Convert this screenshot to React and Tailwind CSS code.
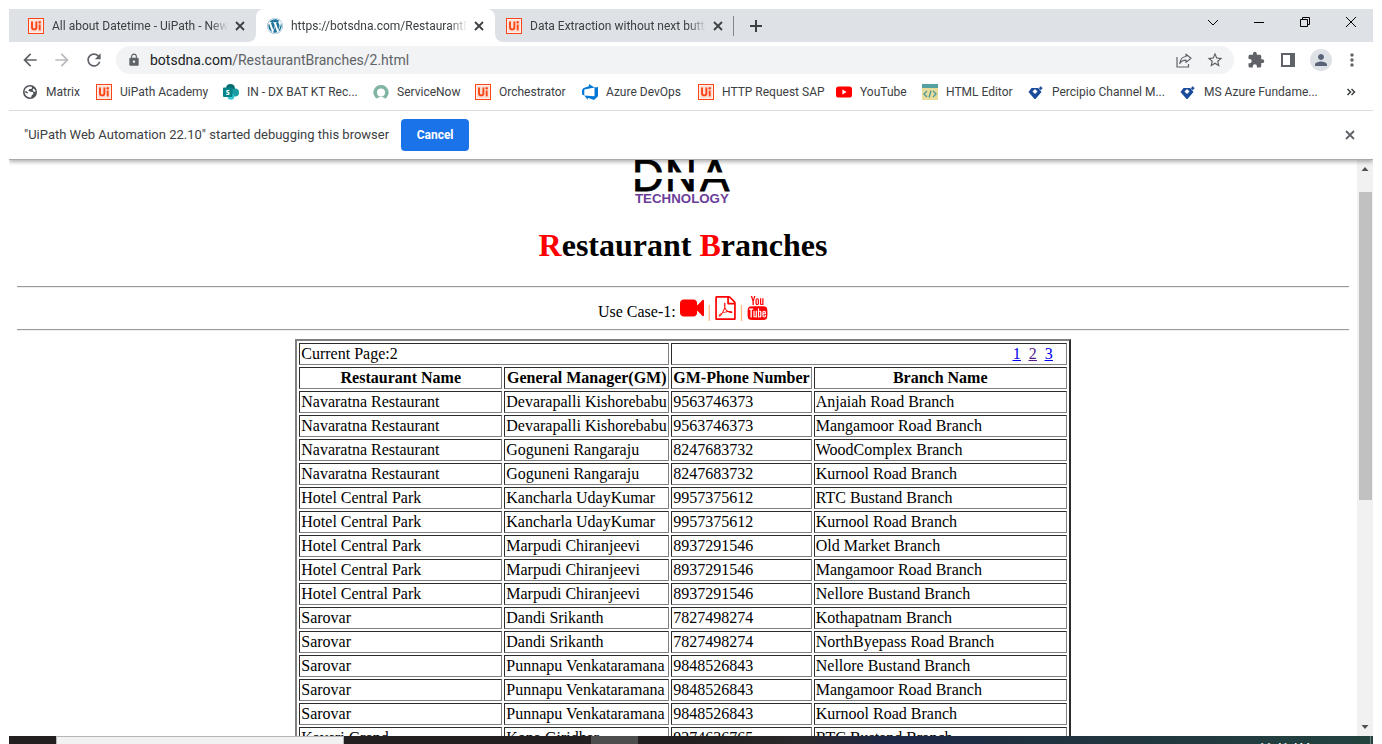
import React from "react";
import { FaWordpress } from "react-icons/fa";
import {
  MdArrowBack,
  MdArrowForward,
  MdRefresh,
  MdLock,
  MdStarBorder,
  MdExtension,
  MdPerson,
  MdMoreVert,
} from "react-icons/md";
import { TfiYoutube } from "react-icons/tfi";

function CrossIcon() {
  return (
    <svg viewBox="0 0 10 10" className="size-2.5" fill="none" stroke="currentColor" strokeWidth="1.8" aria-hidden="true">
      <path d="M1 1l8 8M9 1L1 9" />
    </svg>
  );
}

function UiPathIcon() {
  return (
    <svg viewBox="0 0 16 16" className="size-4 shrink-0" aria-hidden="true">
      <rect width="16" height="16" fill="#fa4616" />
      <rect x="1" y="1" width="14" height="14" fill="#fff" />
      <rect x="1.500" y="1.500" width="13" height="13" fill="#fa4616" fillOpacity="0.18" />
      <path d="M4 3.500v5.700a2.200 2.200 0 0 0 4.400 0V3.500" fill="none" stroke="#fa4616" strokeWidth="1.900" />
      <path d="M11.700 6.500V12.400" stroke="#fa4616" strokeWidth="1.900" />
      <circle cx="11.700" cy="4.300" r="1.200" fill="#fa4616" />
    </svg>
  );
}

function GlobeIcon() {
  return (
    <svg viewBox="0 0 16 16" className="size-4 shrink-0" aria-hidden="true">
      <circle cx="8" cy="8" r="7" fill="#4d5156" />
      <path
        d="M2.600 8C2.600 5 5 2.600 8 2.600c.8 0 1.500.2 2.100.4L9.500 5H7.500L6.200 6.500l2.200 1.300L11 8l.5 2-1.700 1.200-.8 2.200c-3.500.3-6.400-2.200-6.400-5.400l2.700 1.500.9-1L4 7z"
        fill="#fff"
      />
      <path d="M11.500 4.200l1.700 2 .2 2-1.700-.6-1.200-1.600z" fill="#fff" />
    </svg>
  );
}

function SharePointIcon() {
  return (
    <svg viewBox="0 0 16 16" className="size-4 shrink-0" aria-hidden="true">
      <circle cx="7.500" cy="4.500" r="4.500" fill="#036c70" />
      <circle cx="12" cy="8.500" r="4" fill="#1a9ba1" />
      <circle cx="8" cy="12.500" r="3.300" fill="#37c6d0" />
      <rect x="0" y="3.500" width="9.500" height="9.500" rx="1" fill="#038387" />
      <text x="4.700" y="11" fontSize="8" fontWeight="700" fill="#fff" textAnchor="middle" fontFamily="Open Sans, sans-serif">
        s
      </text>
    </svg>
  );
}

function ServiceNowIcon() {
  return (
    <svg viewBox="0 0 16 16" className="size-4 shrink-0" aria-hidden="true">
      <path
        d="M8 1a7.500 7.500 0 0 0-5.200 13c.5.5 1.300.5 1.900.1a5.500 5.500 0 0 1 6.600 0c.6.4 1.400.4 1.900-.1A7.500 7.500 0 0 0 8 1zm0 11.500a4 4 0 1 1 0-8 4 4 0 0 1 0 8z"
        fill="#81b5a1"
      />
    </svg>
  );
}

function DevOpsIcon() {
  return (
    <svg viewBox="0 0 16 16" className="size-4 shrink-0" aria-hidden="true">
      <path
        d="M16 3v9.300L12 16l-6.200-2.200V16l-3.500-4.600 10.200.8V3.500zM12.600 3.600 6.900 0v2.300L1.600 3.900 0 6v4.600l2.300 1V5.600z"
        fill="#0078d7"
      />
    </svg>
  );
}

function YouTubeIcon() {
  return (
    <svg viewBox="0 0 16 16" className="size-4 shrink-0" aria-hidden="true">
      <rect x="0" y="2.500" width="16" height="11" rx="2.600" fill="#f00" />
      <path d="M6.400 5.500v5l4.200-2.500z" fill="#fff" />
    </svg>
  );
}

function HtmlEditorIcon() {
  return (
    <svg viewBox="0 0 16 16" className="size-4 shrink-0" aria-hidden="true">
      <rect width="16" height="16" fill="#e9dc9a" />
      <rect width="16" height="4" fill="#55a0a0" />
      <path d="M5 7 2 10l3 3M11 7l3 3-3 3M9 6.500 7 13.500" fill="none" stroke="#4f9a9c" strokeWidth="1.400" />
    </svg>
  );
}

function PercipioIcon() {
  return (
    <svg viewBox="0 0 16 16" className="size-4 shrink-0" aria-hidden="true">
      <path d="M3.500 4h7l3 4-6 7h-1l-6-7z" fill="#1b4b9b" />
      <path d="M7 5 9.500 7.500 7 10 4.500 7.500z" fill="#fff" />
      <path d="M12.700 2 14.900 4.200l-2.200 2.200-2.200-2.200z" fill="#1b4b9b" stroke="#fff" strokeWidth=".5" />
    </svg>
  );
}

const bookmarks = [
  { label: "Matrix", icon: GlobeIcon, width: "w-[34px]" },
  { label: "UiPath Academy", icon: UiPathIcon, width: "w-[87px]" },
  { label: "IN - DX BAT KT Rec...", icon: SharePointIcon, width: "w-[110px]" },
  { label: "ServiceNow", icon: ServiceNowIcon, width: "w-[62px]" },
  { label: "Orchestrator", icon: UiPathIcon, width: "w-[67px]" },
  { label: "Azure DevOps", icon: DevOpsIcon, width: "w-[76px]" },
  { label: "HTTP Request SAP", icon: UiPathIcon, width: "w-[98px]" },
  { label: "YouTube", icon: YouTubeIcon, width: "w-[46px]" },
  { label: "HTML Editor", icon: HtmlEditorIcon, width: "w-[66px]" },
  { label: "Percipio Channel M...", icon: PercipioIcon, width: "w-[112px]" },
  { label: "MS Azure Fundame...", icon: PercipioIcon, width: "w-[112px]" },
];

const rows = [
  ["Navaratna Restaurant", "Devarapalli Kishorebabu", "9563746373", "Anjaiah Road Branch"],
  ["Navaratna Restaurant", "Devarapalli Kishorebabu", "9563746373", "Mangamoor Road Branch"],
  ["Navaratna Restaurant", "Goguneni Rangaraju", "8247683732", "WoodComplex Branch"],
  ["Navaratna Restaurant", "Goguneni Rangaraju", "8247683732", "Kurnool Road Branch"],
  ["Hotel Central Park", "Kancharla UdayKumar", "9957375612", "RTC Bustand Branch"],
  ["Hotel Central Park", "Kancharla UdayKumar", "9957375612", "Kurnool Road Branch"],
  ["Hotel Central Park", "Marpudi Chiranjeevi", "8937291546", "Old Market Branch"],
  ["Hotel Central Park", "Marpudi Chiranjeevi", "8937291546", "Mangamoor Road Branch"],
  ["Hotel Central Park", "Marpudi Chiranjeevi", "8937291546", "Nellore Bustand Branch"],
  ["Sarovar", "Dandi Srikanth", "7827498274", "Kothapatnam Branch"],
  ["Sarovar", "Dandi Srikanth", "7827498274", "NorthByepass Road Branch"],
  ["Sarovar", "Punnapu Venkataramana", "9848526843", "Nellore Bustand Branch"],
  ["Sarovar", "Punnapu Venkataramana", "9848526843", "Mangamoor Road Branch"],
  ["Sarovar", "Punnapu Venkataramana", "9848526843", "Kurnool Road Branch"],
  ["Kaveri Grand", "Kona Giridhar", "9274636765", "RTC Bustand Branch"],
];

const cell =
  "border border-t-[#2c2c2c] border-l-[#2c2c2c] border-r-[#808080] border-b-[#808080] p-px whitespace-nowrap";

function Tab({ icon, title, label }) {
  return (
    <div className="flex h-full items-center">
      {icon}
      <button
        type="button"
        className="ml-2 w-[176px] overflow-hidden text-left whitespace-nowrap [mask-image:linear-gradient(to_right,#000_90%,transparent)]"
      >
        {title}
      </button>
      <button type="button" aria-label={label} className="ml-1 flex size-4 items-center justify-center text-[#3c4043]">
        <CrossIcon />
      </button>
    </div>
  );
}

function TabStrip() {
  return (
    <div className="flex h-[33px] text-[12px] text-[#3c4043]">
      <div className="w-[247px] rounded-br-lg bg-[#dee1e6] pl-[19px]">
        <Tab icon={<UiPathIcon />} title="All about Datetime - UiPath - News" label="Close first tab" />
      </div>
      <div className="w-[239px] bg-[#dee1e6]">
        <div className="h-full rounded-t-lg bg-white pl-[11px]">
          <Tab
            icon={<FaWordpress className="size-4 shrink-0 text-[#21759b]" />}
            title="https://botsdna.com/RestaurantBranches"
            label="Close current tab"
          />
        </div>
      </div>
      <div className="flex flex-1 items-center rounded-bl-lg bg-[#dee1e6] pl-[11px]">
        <Tab icon={<UiPathIcon />} title="Data Extraction without next button" label="Close third tab" />
        <span className="ml-[7px] h-5 w-px bg-[#80868b]" />
        <button type="button" aria-label="New tab" className="ml-4 text-[#3c4043]">
          <svg viewBox="0 0 12 12" className="size-3" fill="none" stroke="currentColor" strokeWidth="2">
            <path d="M6 0v12M0 6h12" />
          </svg>
        </button>
        <div className="mr-4 ml-auto flex items-center gap-[34px] pb-2 text-black">
          <button type="button" aria-label="Search tabs">
            <svg viewBox="0 0 12 12" className="size-3" fill="none" stroke="currentColor">
              <path d="M1 4l5 5 5-5" />
            </svg>
          </button>
          <button type="button" aria-label="Minimize">
            <svg viewBox="0 0 12 12" className="size-3" fill="none" stroke="currentColor">
              <path d="M1 6.500h10" />
            </svg>
          </button>
          <button type="button" aria-label="Restore">
            <svg viewBox="0 0 12 12" className="size-3" fill="none" stroke="currentColor">
              <path d="M1.500 3.500h7v7h-7zM3.500 3.500v-2h7v7h-2" />
            </svg>
          </button>
          <button type="button" aria-label="Close window">
            <svg viewBox="0 0 12 12" className="size-3" fill="none" stroke="currentColor">
              <path d="M1 1l10 10M11 1L1 11" />
            </svg>
          </button>
        </div>
      </div>
    </div>
  );
}

function Toolbar() {
  return (
    <div className="flex h-9 items-center pr-[13px] pl-[11px] text-[#5f6368]">
      <div className="flex items-center gap-3">
        <button type="button" aria-label="Back">
          <MdArrowBack className="size-5" />
        </button>
        <button type="button" aria-label="Forward" className="text-[#b8babd]">
          <MdArrowForward className="size-5" />
        </button>
        <button type="button" aria-label="Reload">
          <MdRefresh className="size-5" />
        </button>
      </div>
      <div className="ml-3 flex h-7 flex-1 items-center rounded-full bg-[#f1f3f4] pr-2.5 pl-[11px] text-[14px]">
        <MdLock className="size-3.5" />
        <label htmlFor="address" className="ml-[9px] text-[#202124]">
          botsdna.com
        </label>
        <input
          id="address"
          type="text"
          defaultValue="/RestaurantBranches/2.html"
          className="min-w-0 flex-1 bg-transparent outline-none"
        />
        <button type="button" aria-label="Share">
          <svg viewBox="0 0 16 16" className="size-4" fill="none" stroke="currentColor" strokeWidth="1.200">
            <path d="M1 5v10h11.500v-3" />
            <path
              d="M10 2.200 15 6.300 10 10.400V8.200C7 8.200 5 9.200 3.800 11.500 4.200 7.500 6.500 4.800 10 4.500z"
              strokeLinejoin="round"
            />
          </svg>
        </button>
        <button type="button" aria-label="Bookmark this page" className="ml-3.5">
          <MdStarBorder className="size-[18px]" />
        </button>
      </div>
      <div className="ml-3 flex items-center gap-3">
        <button type="button" aria-label="Extensions" className="flex size-5 items-center justify-center">
          <MdExtension className="size-[18px]" />
        </button>
        <button type="button" aria-label="Side panel" className="flex size-5 items-center justify-center">
          <svg viewBox="0 0 14 14" className="size-3.5">
            <path d="M0 0h14v14H0zM2 2v10h7V2z" fill="currentColor" fillRule="evenodd" />
          </svg>
        </button>
        <button
          type="button"
          aria-label="Profile"
          className="flex size-[22px] items-center justify-center rounded-full bg-[#dee1e6] text-[#5a6478]"
        >
          <MdPerson className="size-[18px]" />
        </button>
        <button type="button" aria-label="Menu" className="flex w-4 justify-center">
          <MdMoreVert className="size-5 shrink-0" />
        </button>
      </div>
    </div>
  );
}

function BookmarksBar() {
  return (
    <nav aria-label="Bookmarks" className="flex h-7 items-center gap-4 pr-[17px] pl-[13px] text-[12px] text-[#3c4043]">
      {bookmarks.map(({ label, icon: Icon, width }) => (
        <a key={label} href="#" className="flex shrink-0 items-center gap-2">
          <Icon />
          <span className={`whitespace-nowrap ${width}`}>{label}</span>
        </a>
      ))}
      <button type="button" aria-label="More bookmarks" className="ml-auto">
        <svg viewBox="0 0 10 10" className="size-2.5" fill="none" stroke="#3c4043" strokeWidth="1.500">
          <path d="M1.500 2l3 3-3 3M5.500 2l3 3-3 3" />
        </svg>
      </button>
    </nav>
  );
}

function InfoBar() {
  return (
    <div className="relative z-10 flex h-[50px] items-center border-t border-b border-t-[#dadce0] border-b-[#a8abae] bg-white pr-[18px] pl-[15px] text-[13px] text-[#3c4043] shadow-[0_2px_4px_rgba(0,0,0,0.3)] [clip-path:inset(0_0_-6px_0)]">
      <span className="whitespace-nowrap">"UiPath Web Automation 22.10" started debugging this browser</span>
      <button type="button" className="ml-3 h-8 w-[68px] rounded bg-[#1a73e8] text-[12px] font-bold text-white">
        Cancel
      </button>
      <button type="button" aria-label="Dismiss" className="ml-auto text-[#5f6368]">
        <CrossIcon />
      </button>
    </div>
  );
}

function DnaLogo() {
  return (
    <svg
      viewBox="0 0 100 45"
      className="mx-auto block h-[45px] w-[100px]"
      fontFamily="Liberation Sans, Arial, sans-serif"
    >
      <text y="31" fontSize="44" fill="#000" stroke="#000" strokeWidth="0.8">
        <tspan x="-1">D</tspan>
        <tspan x="32">N</tspan>
        <tspan x="67">A</tspan>
      </text>
      <rect x="0" y="12.500" width="100" height="6.500" fill="#fff" />
      <text x="2" y="42.500" fontSize="13.3" fontWeight="700" fill="#6a3d9a">
        TECHNOLOGY
      </text>
    </svg>
  );
}

function VideoIcon() {
  return (
    <svg viewBox="0 0 1792 1792" className="size-6" fill="currentColor" aria-hidden="true">
      <path d="M1792 352v1088q0 42-39 59-13 5-25 5-27 0-45-19l-403-403v166q0 119-84.5 203.500t-203.500 84.500h-704q-119 0-203.500-84.500t-84.500-203.500v-704q0-119 84.500-203.500t203.500-84.500h704q119 0 203.500 84.500t84.500 203.500v165l403-402q18-19 45-19 12 0 25 5 39 17 39 59z" />
    </svg>
  );
}

function PdfIcon() {
  return (
    <svg viewBox="0 0 1536 1792" className="h-6 w-[21px]" fill="currentColor" aria-hidden="true">
      <path d="M1468 380q28 28 48 76t20 88v1152q0 40-28 68t-68 28h-1344q-40 0-68-28t-28-68v-1600q0-40 28-68t68-28h896q40 0 88 20t76 48zm-444-244v376h376q-10-29-22-41l-313-313q-12-12-41-22zm384 1528v-1024h-416q-40 0-68-28t-28-68v-416h-768v1536h1280zm-514-593q33 26 84 56 59-7 117-7 147 0 177 49 16 22 2 52 0 1-1 2l-2 2v1q-6 38-71 38-48 0-115-20t-130-53q-221 24-392 83-153 262-242 262-15 0-28-7l-24-12q-1-1-6-5-10-10-6-36 9-40 56-91.500t132-96.500q14-9 23 6 2 2 2 4 52-85 107-197 68-136 104-262-24-82-30.500-159.500t6.500-127.500q11-40 42-40h22q23 0 35 15 18 21 9 68-2 6-4 8 1 3 1 8v30q-2 123-14 192 55 164 146 238zm-576 411q52-24 137-158-51 40-87.500 84t-49.500 74zm398-920q-15 42-2 132 1-7 7-44 0-3 7-43 1-4 4-8-1-1-1-2-1-2-1-3-1-22-13-36 0 1-1 2v2zm-124 661q135-54 284-81-2-1-13-9.500t-16-13.500q-76-67-127-176-27 86-83 197-30 56-45 83zm646-16q-24-24-140-24 76 28 124 28 14 0 18-1 0-1-2-3z" />
    </svg>
  );
}

function UseCase() {
  return (
    <div className="flex h-[41px] items-end justify-center gap-1 pb-2">
      <span>Use Case-1:</span>
      <a href="#video" aria-label="Video" className="pb-px text-[#f00]">
        <VideoIcon />
      </a>
      <span className="text-[#ff9a3c]">|</span>
      <a href="#pdf" aria-label="PDF" className="pb-px text-[#f00]">
        <PdfIcon />
      </a>
      <span className="text-[#ff9a3c]">|</span>
      <a href="#youtube" aria-label="YouTube" className="pb-px text-[#f00]">
        <TfiYoutube className="h-6 w-[21px]" preserveAspectRatio="xMidYMid slice" />
      </a>
    </div>
  );
}

function BranchTable() {
  return (
    <table className="mx-auto border-separate border-spacing-0.5 border-2 border-t-[#808080] border-l-[#808080] border-r-[#2c2c2c] border-b-[#2c2c2c]">
      <colgroup>
        <col className="w-[203px]" />
        <col className="w-[165px]" />
        <col className="w-[139px]" />
        <col className="w-[253px]" />
      </colgroup>
      <tbody>
        <tr>
          <td colSpan={2} className={cell}>
            Current Page:2
          </td>
          <td colSpan={2} className={cell}>
            <div className="flex justify-end gap-2 pr-3 text-[#00e] underline">
              <a href="#1">1</a>
              <a href="#2" className="text-[#551a8b]">
                2
              </a>
              <a href="#3">3</a>
            </div>
          </td>
        </tr>
        <tr>
          <th className={cell}>Restaurant Name</th>
          <th className={cell}>General Manager(GM)</th>
          <th className={cell}>GM-Phone Number</th>
          <th className={cell}>Branch Name</th>
        </tr>
        {rows.map((row, i) => (
          <tr key={i}>
            {row.map((value, j) => (
              <td key={j} className={cell}>
                {value}
              </td>
            ))}
          </tr>
        ))}
      </tbody>
    </table>
  );
}

function Page() {
  return (
    <main className="min-w-0 flex-1 overflow-hidden px-2 font-['Liberation_Serif',serif] text-[16px] leading-[18px] text-black">
      <DnaLogo />
      <h1 className="mt-[22px] text-center text-[32px] leading-[37px] font-bold">
        <span className="text-[#f00]">R</span>estaurant <span className="text-[#f00]">B</span>ranches
      </h1>
      <hr className="mt-[22px] border-t border-b border-t-[#9a9a9a] border-b-[#eee]" />
      <UseCase />
      <hr className="mb-2 border-t border-b border-t-[#9a9a9a] border-b-[#eee]" />
      <BranchTable />
    </main>
  );
}

function Scrollbar() {
  return (
    <div aria-hidden="true" className="flex w-4 shrink-0 flex-col items-center bg-[#f1f1f1]">
      <svg viewBox="0 0 16 32" className="h-8 w-4">
        <path d="M4.500 11 8 7l3.500 4z" fill="#505050" />
      </svg>
      <div className="h-[308px] w-[13px] bg-[#c1c1c1]" />
      <svg viewBox="0 0 16 16" className="mt-auto h-4 w-4">
        <path d="M4.500 5 8 9l3.500-4z" fill="#505050" />
      </svg>
    </div>
  );
}

function Taskbar() {
  return (
    <footer className="flex h-2 shrink-0 overflow-hidden bg-[linear-gradient(to_right,#231f20_0%,#231f20_50%,#2b292b_58%,#1d2747_65%,#20313f_75%,#23433f_100%)]">
      <div className="w-[47px]" />
      <div className="w-[288px] border border-b-0 border-[#b5b5b5] bg-[#f2f2f2]" />
      <div className="w-[247px]" />
      <div className="w-[47px] bg-[#4d4d4d]" />
      <time className="mt-1 mr-[60px] ml-auto text-[12px] leading-4 text-white">11:41 AM</time>
      <div className="mr-0.5 w-px bg-[#6d7f7c]" />
    </footer>
  );
}

export default function App() {
  return (
    <div className="flex h-screen flex-col overflow-hidden bg-white px-[9px] pt-[9px] font-['Roboto',sans-serif]">
      <TabStrip />
      <Toolbar />
      <BookmarksBar />
      <div className="h-1" />
      <InfoBar />
      <div className="flex min-h-0 flex-1">
        <Page />
        <Scrollbar />
      </div>
      <Taskbar />
    </div>
  );
}
